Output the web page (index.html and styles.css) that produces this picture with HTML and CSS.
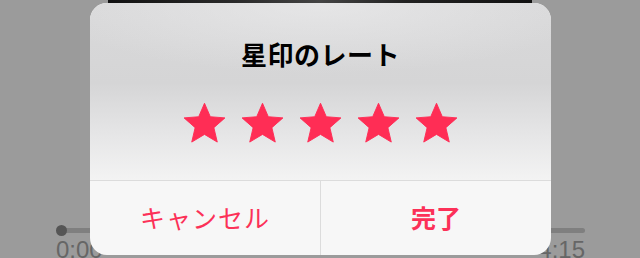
FILE: index.html
```html
<!DOCTYPE html>
<html lang="ja">
<head>
<meta charset="utf-8">
<link rel="stylesheet" href="styles.css">
</head>
<body>
<div class="player">
  <div class="artwork"></div>
  <div class="progress">
    <div class="track"><span class="knob"></span></div>
    <div class="times"><span>0:00</span><span>4:15</span></div>
  </div>
</div>
<div class="dialog">
  <div class="content">
    <div class="title">星印のレート</div>
    <div class="stars">
      <svg class="star" viewBox="0 0 24 24"><path d="M12 1.2l3.1 7.2 7.8.6-5.9 5.2 1.8 7.7L12 17.8l-6.8 4.1 1.8-7.7-5.9-5.2 7.8-.6z"/></svg>
      <svg class="star" viewBox="0 0 24 24"><path d="M12 1.2l3.1 7.2 7.8.6-5.9 5.2 1.8 7.7L12 17.8l-6.8 4.1 1.8-7.7-5.9-5.2 7.8-.6z"/></svg>
      <svg class="star" viewBox="0 0 24 24"><path d="M12 1.2l3.1 7.2 7.8.6-5.9 5.2 1.8 7.7L12 17.8l-6.8 4.1 1.8-7.7-5.9-5.2 7.8-.6z"/></svg>
      <svg class="star" viewBox="0 0 24 24"><path d="M12 1.2l3.1 7.2 7.8.6-5.9 5.2 1.8 7.7L12 17.8l-6.8 4.1 1.8-7.7-5.9-5.2 7.8-.6z"/></svg>
      <svg class="star" viewBox="0 0 24 24"><path d="M12 1.2l3.1 7.2 7.8.6-5.9 5.2 1.8 7.7L12 17.8l-6.8 4.1 1.8-7.7-5.9-5.2 7.8-.6z"/></svg>
    </div>
  </div>
  <div class="buttons">
    <div class="btn cancel">キャンセル</div>
    <div class="btn done">完了</div>
  </div>
</div>
</body>
</html>
```

FILE: styles.css
```css
html, body {
  margin: 0;
  padding: 0;
}
body {
  width: 640px;
  height: 258px;
  overflow: hidden;
  background: #9b9b9b;
  position: relative;
  font-family: "Noto Sans CJK JP", "Noto Sans", sans-serif;
}
.player {
  height: 258px;
  display: flex;
  flex-direction: column;
  justify-content: space-between;
}
.artwork {
  margin: 0 108px;
  height: 4px;
  background: linear-gradient(90deg, #111 0%, #2a2a2a 30%, #444 50%, #222 70%, #111 100%);
}
.progress {
  padding: 0 55px 0 56px;
  height: 30px;
}
.track {
  position: relative;
  height: 5px;
  border-radius: 3px;
  background: #7f7f7f;
  margin-left: 3px;
}
.knob {
  position: absolute;
  left: -3px;
  top: -3px;
  width: 11px;
  height: 11px;
  border-radius: 50%;
  background: #555;
}
.times {
  display: flex;
  justify-content: space-between;
  margin-top: 3px;
  font-family: "Liberation Sans", sans-serif;
  font-size: 24px;
  color: #666;
  line-height: 28px;
}
.dialog {
  position: absolute;
  left: 90px;
  top: 3px;
  width: 461px;
  height: 252px;
  border-radius: 17px;
  overflow: hidden;
  display: flex;
  flex-direction: column;
  background: #f7f7f7;
}
.content {
  height: 177px;
  background:
    radial-gradient(ellipse 60% 40% at 50% 0%, rgba(235,235,236,0.7), rgba(235,235,236,0) 100%),
    linear-gradient(180deg, #d9d9da 0%, #d5d5d6 45%, #e6e6e7 75%, #f3f3f3 100%);
  display: flex;
  flex-direction: column;
  align-items: center;
  border-bottom: 1px solid #dcdcdc;
}
.title {
  margin-top: 34px;
  font-size: 26px;
  font-weight: bold;
  line-height: 34px;
  color: #000;
  letter-spacing: 0.5px;
}
.stars {
  margin-top: 30px;
  display: flex;
  gap: 13px;
}
.star {
  width: 45px;
  height: 45px;
  fill: #ff2d55;
  stroke: #ff2d55;
  stroke-width: 0.5;
  stroke-linejoin: round;
}
.buttons {
  flex: 1;
  display: flex;
}
.btn {
  flex: 1;
  display: flex;
  align-items: center;
  justify-content: center;
  font-size: 25px;
  color: #fc3158;
  padding-bottom: 2px;
}
.cancel {
  border-right: 1px solid #dcdcdc;
  letter-spacing: 1px;
}
.done {
  font-weight: bold;
}
```
